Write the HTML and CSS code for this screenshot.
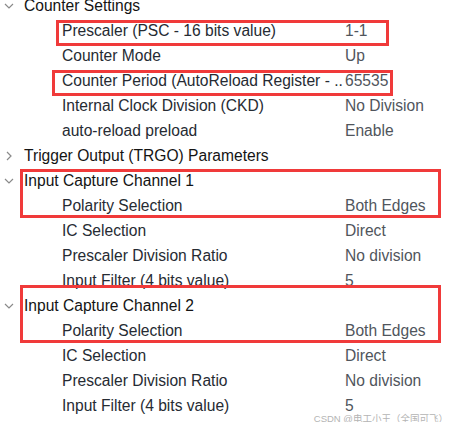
FILE: index.html
```html
<!DOCTYPE html>
<html>
  <head>
    <title>TIM Parameter Settings</title>
    <meta name="viewport" content="width=device-width, initial-scale=1" />
    <link rel="stylesheet" href="styles.css">
  </head>

  <body>
    <main class="tree">
      <div class="row group">
        <svg class="chev" width="10" height="10" viewBox="0 0 10 10"><path d="M1 3 L5 7 L9 3" /></svg>
        <span class="label">Counter Settings</span>
      </div>
      <div class="row item"><span class="label">Prescaler (PSC - 16 bits value)</span><span class="value">1-1</span></div>
      <div class="row item"><span class="label">Counter Mode</span><span class="value">Up</span></div>
      <div class="row item"><span class="label">Counter Period (AutoReload Register - ..</span><span class="value">65535</span></div>
      <div class="row item"><span class="label">Internal Clock Division (CKD)</span><span class="value">No Division</span></div>
      <div class="row item"><span class="label">auto-reload preload</span><span class="value">Enable</span></div>

      <div class="row group">
        <svg class="chev" width="10" height="10" viewBox="0 0 10 10"><path d="M3 1 L7 5 L3 9" /></svg>
        <span class="label">Trigger Output (TRGO) Parameters</span>
      </div>

      <div class="row group">
        <svg class="chev" width="10" height="10" viewBox="0 0 10 10"><path d="M1 3 L5 7 L9 3" /></svg>
        <span class="label">Input Capture Channel 1</span>
      </div>
      <div class="row item"><span class="label">Polarity Selection</span><span class="value">Both Edges</span></div>
      <div class="row item"><span class="label">IC Selection</span><span class="value">Direct</span></div>
      <div class="row item"><span class="label">Prescaler Division Ratio</span><span class="value">No division</span></div>
      <div class="row item"><span class="label">Input Filter (4 bits value)</span><span class="value">5</span></div>

      <div class="row group">
        <svg class="chev" width="10" height="10" viewBox="0 0 10 10"><path d="M1 3 L5 7 L9 3" /></svg>
        <span class="label">Input Capture Channel 2</span>
      </div>
      <div class="row item"><span class="label">Polarity Selection</span><span class="value">Both Edges</span></div>
      <div class="row item"><span class="label">IC Selection</span><span class="value">Direct</span></div>
      <div class="row item"><span class="label">Prescaler Division Ratio</span><span class="value">No division</span></div>
      <div class="row item"><span class="label">Input Filter (4 bits value)</span><span class="value">5</span></div>

      <!-- annotation boxes drawn over the tree -->
      <div class="mark mark-psc"></div>
      <div class="mark mark-arr"></div>
      <div class="mark mark-ch1"></div>
      <div class="mark mark-ch2"></div>

      <div class="watermark">CSDN @电工小王（全国可飞）</div>
    </main>
  </body>
</html>
```

FILE: styles.css
```css
body {
  margin: 0;
  background: #fff;
  font-family: "Liberation Sans", Arial, sans-serif;
  font-size: 15.6px;
  overflow: hidden;
}

.tree {
  position: relative;
  width: 456px;
  height: 429px;
  margin-top: -7px;
}

.row {
  display: flex;
  align-items: center;
  height: 25px;
  white-space: nowrap;
}

.group {
  padding-left: 4px;
  color: #141414;
}

.group .label {
  margin-left: 10px;
}

.chev {
  flex: none;
}

.chev path {
  fill: none;
  stroke: #8a8a8a;
  stroke-width: 1.2;
}

.item {
  padding-left: 62px;
  color: #262b33;
}

.item .label {
  width: 283px;
  flex: none;
}

.value {
  color: #50555c;
}

.mark {
  position: absolute;
  border: 3px solid #f03a3a;
  box-sizing: border-box;
}

.mark-psc {
  left: 56px;
  top: 27px;
  width: 333px;
  height: 26px;
}

.mark-arr {
  left: 52px;
  top: 77px;
  width: 341px;
  height: 26px;
}

.mark-ch1 {
  left: 20px;
  top: 176px;
  width: 421px;
  height: 49px;
}

.mark-ch2 {
  left: 20px;
  top: 292px;
  width: 421px;
  height: 58px;
}

.watermark {
  position: absolute;
  right: 8px;
  top: 418px;
  font-family: "Liberation Sans", "Noto Sans CJK SC", sans-serif;
  font-size: 9.5px;
  color: #b4b4b4;
}
```
